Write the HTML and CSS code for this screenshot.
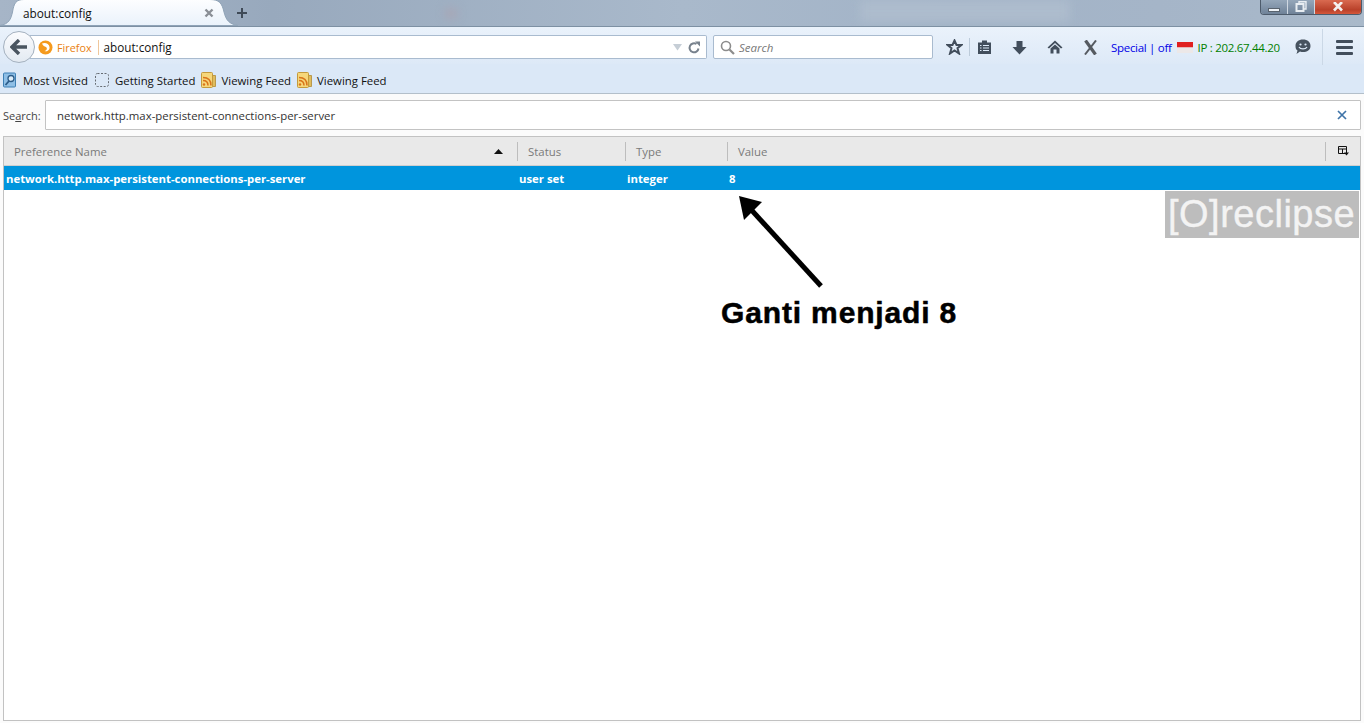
FILE: index.html
```html
<!DOCTYPE html>
<html lang="en">
<head>
<meta charset="utf-8">
<title>about:config</title>
<link rel="stylesheet" href="styles.css">
</head>
<body>
<div class="titlebar">
  <div class="blur blur-a"></div>
  <div class="blur blur-b"></div>
  <div class="tab">
    <svg class="tab-shape" width="240" height="27" viewBox="0 0 240 27"><defs><linearGradient id="tg" x1="0" y1="0" x2="0" y2="1"><stop offset="0" stop-color="#fdfeff"/><stop offset="1" stop-color="#eaf2fb"/></linearGradient></defs><path d="M0 26.500C9 25 11 20 12.500 13C14 4 16 .5 24 .5H210C219 .5 222 4 224 13C226 21 229 25 238 26.500Z" fill="url(#tg)" stroke="#8fa3b7" stroke-width="1"/></svg>
    <span class="tab-title">about:config</span>
    <svg class="tab-close" width="10" height="10" viewBox="0 0 10 10"><path d="M1.500 1.500L8.500 8.500M8.500 1.500L1.500 8.500" stroke="#8a8f96" stroke-width="2.400"/></svg>
  </div>
  <svg class="tab-new" width="12" height="12" viewBox="0 0 12 12"><path d="M6 1V11M1 6H11" stroke="#3f4a57" stroke-width="2"/></svg>
</div>

<div class="navbar">
  <div class="back"><svg width="18" height="16" viewBox="0 0 18 16"><path d="M9 1L2 8L9 15M3 8H17" fill="none" stroke="#4a5560" stroke-width="3.400"/></svg></div>
  <div class="urlbar">
    <svg class="fx" width="15" height="15" viewBox="0 0 15 15"><circle cx="7.500" cy="7.500" r="7" fill="#f59a1d"/><path d="M4 3.500C7 2 11 3.500 11.500 7C12 10 9 12 6.500 11C9 10.500 9.500 8 8 7C6.500 6.500 5 6 4 3.500Z" fill="#fff"/></svg>
    <span class="fx-label">Firefox</span>
    <span class="url-text">about:config</span>
    <svg class="drop" width="11" height="8" viewBox="0 0 11 8"><path d="M1 1H10L5.500 7.500Z" fill="#c6ced6"/></svg>
    <svg class="reload" width="13" height="13" viewBox="0 0 13 13"><path d="M10.500 7.500A4.500 4.500 0 1 1 8.500 3" fill="none" stroke="#77818c" stroke-width="2"/><path d="M7 0.500L12 0.500L12 5.500Z" fill="#77818c"/></svg>
  </div>
  <div class="searchbar">
    <svg width="15" height="15" viewBox="0 0 15 15"><circle cx="6" cy="6" r="4.500" fill="none" stroke="#8c8c8c" stroke-width="1.600"/><path d="M9.500 9.500L14 14" stroke="#8c8c8c" stroke-width="2.200"/></svg>
    <span>Search</span>
  </div>
  <div class="tools">
    <svg class="t-star" width="17" height="16" viewBox="0 0 17 16"><path d="M8.500 1.500L10.500 6H15.500L11.500 9.200L13 14.500L8.500 11.500L4 14.500L5.500 9.200L1.500 6H6.500Z" fill="none" stroke="#424e5c" stroke-width="2"/></svg>
    <i class="t-sep"></i>
    <svg class="t-list" width="15" height="16" viewBox="0 0 15 16"><path d="M1 3.500H5V1.500H10V3.500H14V15H1Z" fill="#424e5c"/><path d="M3 6.500H4.500M6 6.500H12M3 9H4.500M6 9H12M3 11.500H4.500M6 11.500H12" stroke="#dce9f7" stroke-width="1.200"/></svg>
    <svg class="t-down" width="15" height="15" viewBox="0 0 15 15"><path d="M4.500 1H10.500V7H14.500L7.500 14.500L.5 7H4.500Z" fill="#424e5c"/></svg>
    <svg class="t-home" width="16" height="14" viewBox="0 0 16 14"><path d="M8 .5L15.500 7.500L14 8.500L8 3L2 8.500L.5 7.500Z" fill="#424e5c"/><path d="M3.500 8.500L8 4.500L12.500 8.500V13.500H9.500V9.500H6.500V13.500H3.500Z" fill="#424e5c"/></svg>
    <svg class="t-x" width="15" height="15" viewBox="0 0 15 15"><path d="M2.500 .5L12.500 14.500" stroke="#555a60" stroke-width="3.200"/><path d="M13 .5L2 14.500" stroke="#555a60" stroke-width="2"/></svg>
    <span class="t-special">Special | off</span>
    <svg class="t-flag" width="16" height="11" viewBox="0 0 16 11"><rect width="16" height="5.500" fill="#e02020"/><rect y="5.500" width="16" height="5.500" fill="#ece8e8"/></svg>
    <span class="t-ip">IP : 202.67.44.20</span>
    <svg class="t-chat" width="16" height="16" viewBox="0 0 16 16"><path d="M8 .5C12.500 .5 15.500 3 15.500 7C15.500 11 12 13 8 13C7 13 6 13 5 12.500L1.500 15L2.500 11.500C1 10.500 .5 9 .5 7C.5 3 3.500 .5 8 .5Z" fill="#47535f"/><circle cx="5.500" cy="5.500" r="1.100" fill="#dce9f7"/><circle cx="10.500" cy="5.500" r="1.100" fill="#dce9f7"/><path d="M4 8C5.500 10.500 10.500 10.500 12 8" fill="none" stroke="#dce9f7" stroke-width="1.300"/></svg>
    <i class="t-sep t-sep-tall"></i>
    <div class="t-menu"><i></i><i></i><i></i></div>
  </div>
</div>

<div class="bookmarks">
  <div class="bm bm-1">
    <svg width="15" height="16" viewBox="0 0 15 16"><rect x=".5" y="1" width="12" height="14" rx="1" fill="#8fbfe6" stroke="#3d7fb4"/><circle cx="8" cy="6.500" r="3" fill="#dcecf8" stroke="#2d5d8a" stroke-width="1.300"/><path d="M6 9L2.500 13" stroke="#2d5d8a" stroke-width="1.800"/></svg>
    <span>Most Visited</span>
  </div>
  <div class="bm bm-2">
    <svg width="14" height="14" viewBox="0 0 14 14"><rect x=".5" y=".5" width="13" height="13" rx="2" fill="none" stroke="#666c73" stroke-dasharray="2 1.500"/></svg>
    <span>Getting Started</span>
  </div>
  <div class="bm bm-3">
    <svg width="15" height="16" viewBox="0 0 15 16"><path d="M11 3.500H14.500V14.500H11Z" fill="#e0bc5c" stroke="#b08a34" stroke-width=".8"/><rect x=".5" y=".5" width="11" height="15" rx="1" fill="#f6d77b" stroke="#c49a3c"/><circle cx="3" cy="12.500" r="1.200" fill="#d9741a"/><path d="M2 8.500C5 8.500 7 10.500 7 13.500M2 5.500C7 5.500 10 8.500 10 13.500" fill="none" stroke="#d9741a" stroke-width="1.500"/></svg>
    <span>Viewing Feed</span>
  </div>
  <div class="bm bm-4">
    <svg width="15" height="16" viewBox="0 0 15 16"><path d="M11 3.500H14.500V14.500H11Z" fill="#e0bc5c" stroke="#b08a34" stroke-width=".8"/><rect x=".5" y=".5" width="11" height="15" rx="1" fill="#f6d77b" stroke="#c49a3c"/><circle cx="3" cy="12.500" r="1.200" fill="#d9741a"/><path d="M2 8.500C5 8.500 7 10.500 7 13.500M2 5.500C7 5.500 10 8.500 10 13.500" fill="none" stroke="#d9741a" stroke-width="1.500"/></svg>
    <span>Viewing Feed</span>
  </div>
</div>

<main class="page">
  <div class="filter">
    <label class="filter-label">Se<u>a</u>rch:</label>
    <div class="filter-box">
      <span>network.http.max-persistent-connections-per-server</span>
      <svg width="10" height="10" viewBox="0 0 10 10"><path d="M1 1L9 9M9 1L1 9" stroke="#3f74a8" stroke-width="1.700"/></svg>
    </div>
  </div>
  <div class="tree">
    <div class="tree-head">
      <div class="th th-name">Preference Name<svg width="9" height="5" viewBox="0 0 9 5"><path d="M0 5L4.500 0L9 5Z" fill="#111"/></svg></div>
      <div class="th">Status</div>
      <div class="th">Type</div>
      <div class="th">Value</div>
      <div class="th th-pick"><svg width="11" height="10" viewBox="0 0 11 10"><path d="M.5 .5H8.500V7.500H.5ZM.5 3H8.500M4.500 3V7.500" fill="none" stroke="#111"/><path d="M6 6.500H11L8.500 9.500Z" fill="#111"/></svg></div>
    </div>
    <div class="tree-row">
      <div class="td td-name">network.http.max-persistent-connections-per-server</div>
      <div class="td">user set</div>
      <div class="td">integer</div>
      <div class="td">8</div>
    </div>
  </div>
</main>

<div class="winctl">
  <div class="wc wc-min"><i></i></div>
  <div class="wc wc-max"><svg width="12" height="12" viewBox="0 0 12 12"><path d="M4 2V0.800H11V8H9" fill="none" stroke="#e8edf2" stroke-width="1.400"/><rect x="1.500" y="3" width="7" height="7" fill="none" stroke="#e8edf2" stroke-width="2"/></svg></div>
  <div class="wc wc-close"><svg width="12" height="10" viewBox="0 0 12 10"><path d="M2 0L10 8.500M10 0L2 8.500" stroke="#f4f1ef" stroke-width="2.600"/></svg></div>
</div>
<div class="watermark">[O]reclipse</div>
<svg class="arrow" width="90" height="96" viewBox="0 0 90 96"><path d="M83 90L8 8" stroke="#000" stroke-width="5"/><path d="M1 0L24 6L6 24Z" fill="#000"/></svg>
<div class="caption">Ganti menjadi 8</div>
</body>
</html>
```
FILE: styles.css
```css
* { box-sizing: border-box; }
html, body { margin: 0; height: 723px; overflow: hidden; }
body {
  position: relative;
  background: #fbfbfb;
  font-family: "Open Sans", "Noto Sans", sans-serif;
  font-size: 11.400px;
  color: #111;
  display: flex;
  flex-direction: column;
}

/* title bar */
.titlebar {
  position: relative;
  height: 27px;
  flex: none;
  display: flex;
  align-items: center;
  background: linear-gradient(90deg, #a6b5c7 0%, #98a9bd 20%, #a9b9cb 50%, #a2b3c7 70%, #a5b5c8 85%, #a9b9ca 100%);
  border-bottom: 1px solid #7d90a3;
  overflow: hidden;
}
.blur { position: absolute; filter: blur(5px); }
.blur-a { left: 860px; top: 0; width: 210px; height: 22px; background: #adbccd; }
.blur-b { left: 445px; top: 9px; width: 12px; height: 9px; background: #a9a5b4; }
.tab {
  position: relative;
  width: 240px;
  height: 27px;
  flex: none;
  margin-top: -1px;
}
.tab-shape { position: absolute; left: 0; top: 0; }
.tab-title { position: absolute; left: 23px; top: 5px; line-height: 18px; font-size: 11.800px; }
.tab-close { position: absolute; left: 204px; top: 9px; }
.tab-new { flex: none; margin-left: -4px; }

/* nav bar */
.navbar {
  height: 37px;
  flex: none;
  display: flex;
  align-items: center;
  padding: 3px 0 0 3px;
  background: linear-gradient(#eaf2fb, #dde9f7);
  position: relative;
}
.back {
  width: 32px;
  height: 32px;
  flex: none;
  border-radius: 50%;
  border: 1px solid #a4b1bf;
  background: linear-gradient(#fbfcfe, #e3eaf2);
  display: flex;
  align-items: center;
  justify-content: center;
  position: relative;
  z-index: 1;
}
.urlbar {
  margin-left: -5px;
  width: 677px;
  height: 24px;
  flex: none;
  background: #fff;
  border: 1px solid #a9bbcf;
  border-left: 0;
  border-radius: 0 2px 2px 0;
  display: flex;
  align-items: center;
  padding-left: 8px;
}
.fx { flex: none; }
.fx-label { color: #ea7f0f; font-size: 10.800px; margin-left: 4px; padding-right: 6px; border-right: 1px solid #f0c79c; line-height: 15px; }
.url-text { margin-left: 5px; flex: 1; font-size: 11.700px; }
.drop { margin-right: 5px; }
.reload { margin-right: 5px; }
.searchbar {
  margin-left: 6px;
  width: 220px;
  height: 24px;
  flex: none;
  background: #fff;
  border: 1px solid #a9bbcf;
  border-radius: 2px;
  display: flex;
  align-items: center;
  gap: 4px;
  padding-left: 6px;
  color: #777;
  font-style: italic;
  font-size: 11.500px;
}
.tools { flex: 1; display: flex; align-items: center; margin-left: 13px; }
.tools svg { flex: none; }
.t-sep { width: 1px; height: 18px; background: #bccbda; flex: none; margin-left: 6px; }
.t-list { margin-left: 7px; }
.t-down { margin-left: 20px; }
.t-home { margin-left: 20px; }
.t-x { margin-left: 20px; }
.t-special { color: #0000e6; margin-left: 13px; font-size: 11.500px; letter-spacing: -.3px; white-space: nowrap; }
.t-flag { margin-left: 5px; }
.t-ip { color: #008000; margin-left: 5px; font-size: 11.500px; letter-spacing: -.3px; white-space: nowrap; }
.t-chat { margin-left: 15px; }
.t-sep-tall { height: 36px; margin-left: 11px; background: #cbd8e6; }
.t-menu { margin-left: 13px; width: 17px; display: flex; flex-direction: column; gap: 3px; }
.t-menu i { display: block; height: 3px; border-radius: 1px; background: #424e5c; }

/* bookmarks */
.bookmarks {
  height: 30px;
  flex: none;
  display: flex;
  align-items: center;
  padding: 3px 0 0 3px;
  background: #dbe8f7;
  border-bottom: 1px solid #b3bfca;
  white-space: nowrap;
}
.bm { display: flex; align-items: center; gap: 5px; flex: none; }
.bm-2 { margin-left: 7px; gap: 6px; }
.bm-3 { margin-left: 6px; }
.bm-4 { margin-left: 6px; }

/* content */
.page { flex: 1; display: flex; flex-direction: column; padding: 6px 3px 2px 3px; min-height: 0; }
.filter { display: flex; align-items: center; height: 30px; flex: none; }
.filter-label { width: 42px; flex: none; color: #444; font-size: 11px; }
.filter-box {
  flex: 1;
  height: 30px;
  background: #fff;
  border: 1px solid #c3c3c3;
  border-radius: 1px;
  display: flex;
  align-items: center;
  justify-content: space-between;
  padding: 0 13px 0 11px;
  color: #333;
}
.tree {
  flex: 1;
  margin-top: 6px;
  background: #fff;
  border: 1px solid #c2c2c2;
  display: flex;
  flex-direction: column;
}
.tree-head, .tree-row { display: grid; grid-template-columns: 513px 108px 102px 598px 1fr; flex: none; }
.tree-head { height: 29px; background: #e9e9e9; border-bottom: 1px solid #cfcfcf; align-items: center; }
.th {
  height: 19px;
  line-height: 19px;
  padding-left: 10px;
  border-left: 1px solid #bdbdbd;
  color: #7a7a7a;
}
.th-name { border-left: 0; padding-right: 14px; display: flex; justify-content: space-between; align-items: center; }
.th-pick { display: flex; align-items: center; padding-left: 12px; }
.tree-row { height: 24px; background: #0095dd; color: #fff; font-weight: 700; align-items: center; font-size: 11.350px; }
.td { padding-left: 2px; }

/* overlays */
.winctl { position: absolute; left: 1260px; top: 0; width: 102px; height: 15px; display: flex; border: 1px solid #4d5b6b; border-top: 0; border-radius: 0 0 4px 4px; overflow: hidden; }
.wc { height: 100%; display: flex; align-items: center; justify-content: center; }
.wc-min, .wc-max { width: 27px; background: linear-gradient(#95a7ba, #6f8298); border-right: 1px solid #cfd8e2; }
.wc-min i { width: 12px; height: 4px; margin-top: 6px; background: #eef2f6; border: 1px solid #59636e; }
.wc-close { flex: 1; background: linear-gradient(#d96a50, #b9412a 70%, #d5573a); }
.watermark {
  position: absolute;
  left: 1165px;
  top: 191px;
  width: 194px;
  height: 47px;
  background: #bdbdbd;
  color: #f3f3f3;
  font-family: "Liberation Sans", sans-serif;
  font-size: 38px;
  line-height: 46px;
  letter-spacing: .5px;
  -webkit-text-stroke: .4px #f3f3f3;
  padding-left: 3px;
  white-space: nowrap;
}
.arrow { position: absolute; left: 738px; top: 196px; }
.caption {
  position: absolute;
  left: 721px;
  top: 294px;
  font-family: "Liberation Sans", sans-serif;
  font-weight: 700;
  font-size: 30px;
  line-height: 38px;
  letter-spacing: .85px;
  -webkit-text-stroke: .5px #000;
  color: #000;
  white-space: nowrap;
}
```
